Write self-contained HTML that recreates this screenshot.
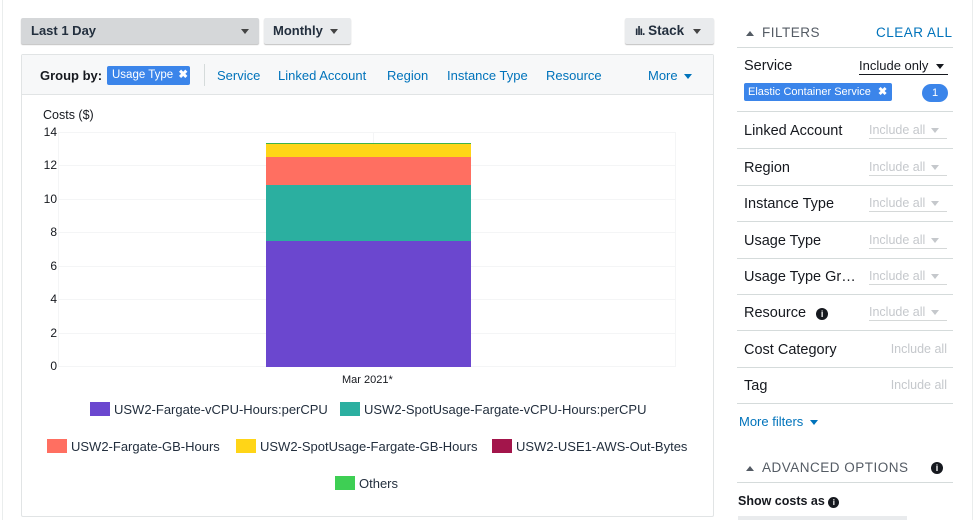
<!DOCTYPE html>
<html><head><style>
*{box-sizing:border-box;margin:0;padding:0}
body{width:977px;height:520px;overflow:hidden;background:#fff;font-family:"Liberation Sans",sans-serif;color:#16191f;position:relative}
.a{position:absolute}
.btn{position:absolute;background:#e9ebed;border-radius:2px;box-shadow:0 1px 1px rgba(0,0,0,.25);font-size:13px;font-weight:bold;color:#232f3e;line-height:26px}
.tri{display:inline-block;width:0;height:0;border-left:4px solid transparent;border-right:4px solid transparent;border-top:5px solid #444;vertical-align:middle}
.link{color:#0073bb;font-size:13px}
.fr{position:absolute;left:737px;width:216px;height:37px;border-bottom:1px solid #d5dbdb;font-size:14.5px}
.fr .l{position:absolute;left:7px;top:11px}
.fr .r{position:absolute;right:6px;top:11px;color:#c5c8cc;font-size:12.5px;border-bottom:1px solid #d5d8d8;width:78px;padding-bottom:1px}
.fr .r .tri{border-top-color:#c5c8cc;margin-left:6px}
.yl{position:absolute;left:30px;width:30px;text-align:right;font-size:12px;padding-right:3px}
.grid{position:absolute;left:58px;width:618px;height:1px;background:#f4f5f6}
.lg{position:absolute;font-size:13px;color:#232f3e}
.lg i{display:inline-block;width:20px;height:14px;vertical-align:-2px;margin-right:4px}
</style></head><body>
<div class="a" style="left:2px;top:0;width:1px;height:520px;background:#eaeded"></div>
<div class="a" style="left:972px;top:0;width:1px;height:520px;background:#eaeded"></div>

<div class="btn" style="left:21px;top:18px;width:238px;height:26px;background:#d5d7d9;padding-left:10px">Last 1 Day<span class="tri" style="position:absolute;right:10px;top:11px"></span></div>
<div class="btn" style="left:264px;top:18px;width:87px;height:26px;padding-left:9px">Monthly <span class="tri" style="margin-left:4px"></span></div>
<div class="btn" style="left:625px;top:18px;width:89px;height:26px;padding-left:10px;font-size:13.5px"><span style="font-size:12px;letter-spacing:-1px">ılı.</span> Stack <span class="tri" style="margin-left:5px"></span></div>

<div class="a" style="left:21px;top:54px;width:693px;height:463px;border:1px solid #e1e4e5;border-radius:2px"></div>
<div class="a" style="left:22px;top:55px;width:691px;height:40px;background:#f7f8f9;border-bottom:1px solid #e1e4e5"></div>
<div class="a" style="left:40px;top:68px;font-size:13px;font-weight:bold">Group by:</div>
<div class="a" style="left:107px;top:66px;width:83px;height:19px;background:#3b85ea;border-radius:2px;color:#fff;font-size:11.5px;line-height:19px;padding-left:5px;white-space:nowrap">Usage Type <b style="margin-left:2px">✖</b></div>
<div class="a" style="left:204px;top:64px;width:1px;height:22px;background:#d5dbdb"></div>
<div class="a link" style="left:217px;top:68px">Service</div>
<div class="a link" style="left:278px;top:68px">Linked Account</div>
<div class="a link" style="left:387px;top:68px">Region</div>
<div class="a link" style="left:447px;top:68px">Instance Type</div>
<div class="a link" style="left:546px;top:68px">Resource</div>
<div class="a link" style="left:648px;top:68px">More <span class="tri" style="border-top-color:#0073bb;margin-left:3px"></span></div>

<div class="a" style="left:43px;top:108px;font-size:12.5px">Costs ($)</div>
<div class="grid" style="top:132px"></div><div class="grid" style="top:165px"></div><div class="grid" style="top:199px"></div><div class="grid" style="top:232px"></div><div class="grid" style="top:266px"></div><div class="grid" style="top:299px"></div><div class="grid" style="top:333px"></div><div class="grid" style="top:366px"></div>
<div class="a" style="left:58px;top:132px;width:1px;height:234px;background:#f4f5f6"></div>
<div class="a" style="left:373px;top:132px;width:1px;height:234px;background:#f4f5f6"></div>
<div class="a" style="left:675px;top:132px;width:1px;height:234px;background:#f4f5f6"></div>
<div class="yl" style="top:125px">14</div><div class="yl" style="top:158px">12</div><div class="yl" style="top:192px">10</div><div class="yl" style="top:225px">8</div><div class="yl" style="top:259px">6</div><div class="yl" style="top:292px">4</div><div class="yl" style="top:326px">2</div><div class="yl" style="top:359px">0</div>
<div class="a" style="left:266px;top:143px;width:205px;height:1px;background:#3fb24b"></div>
<div class="a" style="left:266px;top:144px;width:205px;height:13px;background:#ffd517"></div>
<div class="a" style="left:266px;top:157px;width:205px;height:28px;background:#ff6f61"></div>
<div class="a" style="left:266px;top:185px;width:205px;height:56px;background:#2bafa0"></div>
<div class="a" style="left:266px;top:241px;width:205px;height:126px;background:#6b47cf"></div>
<div class="a" style="left:342px;top:374px;font-size:11px">Mar 2021*</div>

<div class="lg" style="left:90px;top:402px"><i style="background:#6b47cf"></i>USW2-Fargate-vCPU-Hours:perCPU</div>
<div class="lg" style="left:340px;top:402px"><i style="background:#2bafa0"></i>USW2-SpotUsage-Fargate-vCPU-Hours:perCPU</div>
<div class="lg" style="left:47px;top:439px"><i style="background:#ff6f61"></i>USW2-Fargate-GB-Hours</div>
<div class="lg" style="left:236px;top:439px"><i style="background:#ffd517"></i>USW2-SpotUsage-Fargate-GB-Hours</div>
<div class="lg" style="left:492px;top:439px"><i style="background:#a3154b"></i>USW2-USE1-AWS-Out-Bytes</div>
<div class="lg" style="left:335px;top:476px"><i style="background:#3ecf54"></i>Others</div>

<div class="a" style="left:746px;top:25px;font-size:13.5px;color:#545b64;letter-spacing:.5px"><span class="tri" style="border-top:none;border-bottom:5px solid #545b64;margin-right:8px"></span>FILTERS</div>
<div class="a" style="left:876px;top:25px;font-size:13.5px;color:#0073bb;letter-spacing:.5px">CLEAR ALL</div>
<div class="a" style="left:737px;top:47px;width:216px;height:1px;background:#d5dbdb"></div>
<div class="a" style="left:744px;top:58px;font-size:14.5px">Service</div>
<div class="a" style="left:859px;top:58px;font-size:13px;border-bottom:1px solid #16191f;width:89px;padding-bottom:1px">Include only <span class="tri" style="border-top-color:#16191f;margin-left:4px"></span></div>
<div class="a" style="left:744px;top:83px;width:148px;height:18px;background:#3b85ea;border-radius:2px;color:#fff;font-size:11px;line-height:18px;padding-left:4px;white-space:nowrap">Elastic Container Service <b style="margin-left:4px">✖</b></div>
<div class="a" style="left:922px;top:84px;width:26px;height:18px;background:#3b85ea;border-radius:9px;color:#fff;font-size:11px;line-height:18px;text-align:center">1</div>
<div class="a" style="left:737px;top:111px;width:216px;height:1px;background:#d5dbdb"></div>

<div class="fr" style="top:112px"><span class="l">Linked Account</span><span class="r">Include all<span class="tri"></span></span></div>
<div class="fr" style="top:149px"><span class="l">Region</span><span class="r">Include all<span class="tri"></span></span></div>
<div class="fr" style="top:185px"><span class="l">Instance Type</span><span class="r">Include all<span class="tri"></span></span></div>
<div class="fr" style="top:222px"><span class="l">Usage Type</span><span class="r">Include all<span class="tri"></span></span></div>
<div class="fr" style="top:258px"><span class="l">Usage Type Gr…</span><span class="r">Include all<span class="tri"></span></span></div>
<div class="fr" style="top:294px"><span class="l">Resource <span style="display:inline-block;width:12px;height:12px;border-radius:50%;background:#16191f;color:#fff;font-size:9px;text-align:center;line-height:12px;font-weight:bold;margin-left:6px;vertical-align:0">i</span></span><span class="r">Include all<span class="tri"></span></span></div>
<div class="fr" style="top:331px"><span class="l">Cost Category</span><span class="r" style="border:none;text-align:right">Include all</span></div>
<div class="fr" style="top:367px"><span class="l">Tag</span><span class="r" style="border:none;text-align:right">Include all</span></div>
<div class="a link" style="left:739px;top:414px">More filters <span class="tri" style="border-top-color:#0073bb;margin-left:3px"></span></div>

<div class="a" style="left:746px;top:460px;font-size:13.5px;color:#545b64;letter-spacing:.5px"><span class="tri" style="border-top:none;border-bottom:5px solid #545b64;margin-right:8px"></span>ADVANCED OPTIONS</div>
<div class="a" style="left:931px;top:462px;width:12px;height:12px;border-radius:50%;background:#16191f;color:#fff;font-size:9px;text-align:center;line-height:12px;font-weight:bold">i</div>
<div class="a" style="left:737px;top:482px;width:216px;height:1px;background:#d5dbdb"></div>
<div class="a" style="left:738px;top:494px;font-size:12.5px;font-weight:bold">Show costs as <span style="display:inline-block;width:11px;height:11px;border-radius:50%;background:#16191f;color:#fff;font-size:8px;text-align:center;line-height:11px">i</span></div>
<div class="a" style="left:738px;top:516px;width:169px;height:4px;background:#e9ebed"></div>
</body></html>
